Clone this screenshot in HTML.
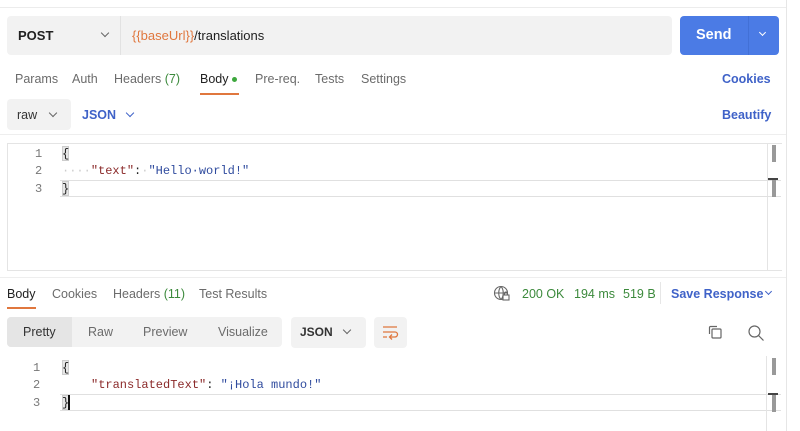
<!DOCTYPE html>
<html><head><meta charset="utf-8"><style>
*{margin:0;padding:0;box-sizing:border-box}
body{width:800px;height:431px;background:#fff;font-family:"Liberation Sans",sans-serif;position:relative;overflow:hidden;font-size:12.5px;color:#212121}
.a{position:absolute;white-space:pre}
.g{color:#6b6b6b}
.b{color:#3f62c8;font-weight:bold}
.mono{font-family:"Liberation Mono",monospace;font-size:12px}
.ln{color:#777;font-family:"Liberation Mono",monospace;font-size:12px}
.chev{position:absolute;width:6px;height:6px;border-right:1.3px solid #666;border-bottom:1.3px solid #666;transform:rotate(45deg)}
</style></head><body>
<div class="a" style="left:0;top:7px;width:786px;height:1px;background:#ececec"></div>
<div class="a" style="left:786px;top:0;width:1px;height:431px;background:#e6e6e6"></div>

<div class="a" style="left:7px;top:16px;width:665px;height:39px;background:#f2f2f2;border-radius:4px"></div>
<div class="a" style="left:120px;top:16px;width:1px;height:39px;background:#e2e2e2"></div>
<div class="a" style="left:18px;top:28px;font-weight:bold;font-size:13px">POST</div>
<div class="chev" style="left:102px;top:30px"></div>
<div class="a" style="left:132px;top:28px;font-size:13px"><span style="color:#e0773e">{{baseUrl}}</span>/translations</div>

<div class="a" style="left:680px;top:16px;width:99px;height:39px;background:#4b7be5;border-radius:4px"></div>
<div class="a" style="left:748px;top:16px;width:1px;height:39px;background:#4270d6"></div>
<div class="a" style="left:696px;top:27px;color:#fff;font-weight:bold;font-size:14.5px">Send</div>
<div class="chev" style="left:760px;top:30px;border-color:#fff;width:5px;height:5px"></div>

<div class="a g" style="left:15px;top:72px">Params</div>
<div class="a g" style="left:72px;top:72px">Auth</div>
<div class="a g" style="left:114px;top:72px">Headers <span style="color:#3c8a3c">(7)</span></div>
<div class="a" style="left:200px;top:72px">Body</div>
<div class="a" style="left:232px;top:77px;width:5px;height:5px;border-radius:50%;background:#3da73d"></div>
<div class="a" style="left:200px;top:93px;width:39px;height:2px;background:#e0773e"></div>
<div class="a g" style="left:255px;top:72px">Pre-req.</div>
<div class="a g" style="left:315px;top:72px">Tests</div>
<div class="a g" style="left:361px;top:72px">Settings</div>
<div class="a b" style="left:722px;top:72px">Cookies</div>

<div class="a" style="left:7px;top:99px;width:64px;height:31px;background:#f2f2f2;border-radius:4px"></div>
<div class="a" style="left:17px;top:108px;color:#333">raw</div>
<div class="chev" style="left:50px;top:110px"></div>
<div class="a b" style="left:82px;top:108px">JSON</div>
<div class="chev" style="left:127px;top:110px;border-color:#3f62c8"></div>
<div class="a b" style="left:722px;top:108px">Beautify</div>
<div class="a" style="left:0;top:134px;width:786px;height:1px;background:#eee"></div>

<div class="a" style="left:7px;top:143px;width:775px;height:128px;border:1px solid #e4e4e4;border-right:none"></div>
<div class="a" style="left:767px;top:143px;width:1px;height:128px;background:#e4e4e4"></div>
<div class="a" style="left:60px;top:180px;width:721px;height:17px;border-top:1px solid #e0e0e0;border-bottom:1px solid #e0e0e0"></div>
<div class="a" style="left:772px;top:145px;width:4px;height:17px;background:#999"></div>
<div class="a" style="left:768px;top:178px;width:10px;height:2px;background:#444"></div>
<div class="a" style="left:772px;top:180px;width:4px;height:17px;background:#999"></div>
<div class="a ln" style="left:35px;top:147px">1</div>
<div class="a ln" style="left:35px;top:164px">2</div>
<div class="a ln" style="left:35px;top:182px">3</div>
<div class="a" style="left:62px;top:146px;width:7px;height:15px;background:#e6e6e6;border:1px solid #ccc"></div>
<div class="a" style="left:62px;top:181px;width:7px;height:15px;background:#e6e6e6;border:1px solid #ccc"></div>
<div class="a mono" style="left:62px;top:147px">{</div>
<div class="a mono" style="left:62px;top:164px"><span style="color:#ccc">····</span><span style="color:#8b2a2a">"text"</span>:<span style="color:#ccc">·</span><span style="color:#2f4b9e">"Hello·world!"</span></div>
<div class="a mono" style="left:62px;top:182px">}</div>

<div class="a" style="left:0;top:277px;width:786px;height:1px;background:#eee"></div>
<div class="a" style="left:7px;top:287px">Body</div>
<div class="a" style="left:7px;top:307px;width:29px;height:2px;background:#e0773e"></div>
<div class="a g" style="left:52px;top:287px">Cookies</div>
<div class="a g" style="left:113px;top:287px">Headers <span style="color:#3c8a3c">(11)</span></div>
<div class="a g" style="left:199px;top:287px">Test Results</div>

<svg class="a" style="left:493px;top:285px" width="18" height="17" viewBox="0 0 18 17" fill="none" stroke="#666" stroke-width="1.1"><circle cx="8" cy="8" r="6.5"/><path d="M1.5 8h13M8 1.5c-3 3-3 10 0 13M8 1.5c3 3 3 10 0 13"/><rect x="10" y="10" width="6" height="5" fill="#fff"/><path d="M11.5 10V8.5a1.5 1.5 0 013 0V10"/></svg>
<div class="a" style="left:522px;top:287px;color:#3c8a3c">200 OK</div>
<div class="a" style="left:574px;top:287px;color:#3c8a3c">194 ms</div>
<div class="a" style="left:623px;top:287px;color:#3c8a3c">519 B</div>
<div class="a" style="left:660px;top:282px;width:1px;height:22px;background:#e6e6e6"></div>
<div class="a b" style="left:671px;top:287px">Save Response</div>
<div class="chev" style="left:766px;top:289px;border-color:#3f62c8;width:5px;height:5px"></div>

<div class="a" style="left:7px;top:317px;width:275px;height:30px;background:#f2f2f2;border-radius:4px"></div>
<div class="a" style="left:7px;top:317px;width:65px;height:30px;background:#e5e5e5;border-radius:4px 0 0 4px"></div>
<div class="a" style="left:23px;top:325px;color:#333">Pretty</div>
<div class="a g" style="left:88px;top:325px">Raw</div>
<div class="a g" style="left:143px;top:325px">Preview</div>
<div class="a g" style="left:218px;top:325px">Visualize</div>
<div class="a" style="left:291px;top:317px;width:75px;height:31px;background:#f2f2f2;border-radius:4px"></div>
<div class="a" style="left:300px;top:325px;color:#333;font-weight:bold;font-size:12px">JSON</div>
<div class="chev" style="left:344px;top:327px"></div>
<div class="a" style="left:374px;top:317px;width:33px;height:31px;background:#f2f2f2;border-radius:4px"></div>
<svg class="a" style="left:381px;top:324px" width="18" height="16" viewBox="0 0 18 16" fill="none" stroke="#e0773e" stroke-width="1.3"><path d="M2 3h14M2 8h12a2.5 2.5 0 010 5H9M11 10.5L8.5 13 11 15.5M2 13h4"/></svg>
<svg class="a" style="left:707px;top:324px" width="16" height="16" viewBox="0 0 16 16" fill="none" stroke="#666" stroke-width="1.2"><rect x="5" y="5" width="9" height="9" rx="1"/><path d="M2.5 10V3.5a1 1 0 011-1H10"/></svg>
<svg class="a" style="left:747px;top:324px" width="18" height="18" viewBox="0 0 18 18" fill="none" stroke="#666" stroke-width="1.2"><circle cx="7.5" cy="7.5" r="5.5"/><path d="M11.5 11.5l5 5"/></svg>

<div class="a" style="left:60px;top:394px;width:721px;height:17px;border-top:1px solid #e0e0e0;border-bottom:1px solid #e0e0e0"></div>
<div class="a" style="left:766px;top:356px;width:1px;height:75px;background:#e4e4e4"></div>
<div class="a" style="left:772px;top:358px;width:4px;height:17px;background:#999"></div>
<div class="a" style="left:768px;top:393px;width:10px;height:2px;background:#444"></div>
<div class="a" style="left:772px;top:395px;width:4px;height:17px;background:#999"></div>
<div class="a ln" style="left:33px;top:361px">1</div>
<div class="a ln" style="left:33px;top:378px">2</div>
<div class="a ln" style="left:33px;top:396px">3</div>
<div class="a" style="left:62px;top:360px;width:7px;height:15px;background:#e6e6e6;border:1px solid #ccc"></div>
<div class="a" style="left:62px;top:395px;width:7px;height:15px;background:#e6e6e6;border:1px solid #ccc"></div>
<div class="a" style="left:68px;top:395px;width:2px;height:15px;background:#111"></div>
<div class="a mono" style="left:62px;top:361px">{</div>
<div class="a mono" style="left:91px;top:378px"><span style="color:#8b2a2a">"translatedText"</span>: <span style="color:#2f4b9e">"¡Hola mundo!"</span></div>
<div class="a mono" style="left:62px;top:396px">}</div>
</body></html>
